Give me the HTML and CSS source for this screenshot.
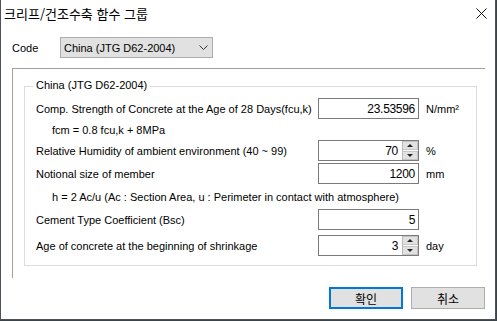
FILE: index.html
```html
<!DOCTYPE html>
<html lang="ko">
<head>
  <meta charset="UTF-8" />
  <title>크리프/건조수축 함수 그룹</title>
  <link rel="stylesheet" href="styles.css">
</head>
<body>
  <div class="dialog">
    <div class="titlebar">
      <span class="title">크리프/건조수축 함수 그룹</span>
      <svg class="close" width="11" height="11" viewBox="0 0 11 11">
        <path d="M0.5 0.5 L10.5 10.5 M10.5 0.5 L0.5 10.5" stroke="#111" stroke-width="1" fill="none"/>
      </svg>
    </div>

    <div class="content">
      <div class="code-row">
        <span class="code-label">Code</span>
        <div class="select">
          <span>China (JTG D62-2004)</span>
          <svg width="9" height="5" viewBox="0 0 9 5">
            <path d="M0.5 0.5 L4.5 4.5 L8.5 0.5" stroke="#333" stroke-width="1" fill="none"/>
          </svg>
        </div>
      </div>

      <div class="frame">
        <div class="group">
          <span class="legend">China (JTG D62-2004)</span>

          <div class="row">
            <span class="label">Comp. Strength of Concrete at the Age of 28 Days(fcu,k)</span>
            <div class="field"><span class="value">23.53596</span></div>
            <span class="unit">N/mm²</span>
          </div>
          <div class="note note-fcm">fcm = 0.8 fcu,k + 8MPa</div>
          <div class="row">
            <span class="label">Relative Humidity of ambient environment (40 ~ 99)</span>
            <div class="field spin">
              <span class="value">70</span>
              <div class="spinner">
                <span class="arrow up"></span>
                <span class="arrow down"></span>
              </div>
            </div>
            <span class="unit">%</span>
          </div>
          <div class="row row-gap-2">
            <span class="label">Notional size of member</span>
            <div class="field"><span class="value">1200</span></div>
            <span class="unit">mm</span>
          </div>
          <div class="note note-h">h = 2 Ac/u (Ac : Section Area, u : Perimeter in contact with atmosphere)</div>
          <div class="row row-gap-2">
            <span class="label">Cement Type Coefficient (Bsc)</span>
            <div class="field"><span class="value">5</span></div>
            <span class="unit"></span>
          </div>
          <div class="row row-gap-5">
            <span class="label">Age of concrete at the beginning of shrinkage</span>
            <div class="field spin">
              <span class="value">3</span>
              <div class="spinner">
                <span class="arrow up"></span>
                <span class="arrow down"></span>
              </div>
            </div>
            <span class="unit">day</span>
          </div>
        </div>
      </div>

      <div class="buttons">
        <button class="btn btn-default">확인</button>
        <button class="btn">취소</button>
      </div>
    </div>
  </div>
</body>
</html>
```

FILE: styles.css
```css
body {
  margin: 0;
  background: #3b434b;
  font-family: 'Liberation Sans', 'Noto Sans CJK KR', sans-serif;
  font-size: 11px;
  color: #000;
}

.dialog {
  width: 496px;
  height: 320px;
  box-sizing: border-box;
  background: #fff;
  border: 1px solid #4d5258;
  border-top: none;
  display: flex;
  flex-direction: column;
}

.titlebar {
  height: 26px;
  display: flex;
  align-items: center;
  justify-content: space-between;
  padding: 0 8px 0 3px;
}

.title {
  font-family: 'Noto Sans CJK KR', sans-serif;
  font-size: 13px;
}

.close {
  margin-top: 1px;
}

.content {
  padding: 0 9px 0 11px;
}

.code-row {
  margin-top: 11px;
  height: 21px;
  display: flex;
  align-items: center;
}

.code-label {
  width: 48px;
}

.select {
  width: 153px;
  height: 21px;
  box-sizing: border-box;
  background: #e1e1e1;
  border: 1px solid #adadad;
  display: flex;
  align-items: center;
  justify-content: space-between;
  padding: 0 4px 0 3px;
}

.frame {
  margin-top: 10px;
  width: 473px;
  height: 210px;
  box-sizing: border-box;
  border-top: 1px solid #a0a0a0;
  border-left: 1px solid #a0a0a0;
  padding: 17px 0 0 11px;
}

.group {
  position: relative;
  width: 453px;
  height: 180px;
  box-sizing: border-box;
  border: 1px solid #dcdcdc;
  padding: 11px 0 0 11px;
}

.legend {
  position: absolute;
  top: -8px;
  left: 8px;
  padding: 0 3px;
  background: #fff;
}

.row {
  height: 21px;
  display: flex;
  align-items: center;
}

.row-gap-2 {
  margin-top: 2px;
}

.row-gap-5 {
  margin-top: 5px;
}

.label {
  width: 282px;
  white-space: nowrap;
}

.field {
  width: 101px;
  height: 21px;
  box-sizing: border-box;
  border: 1px solid #7a7a7a;
  display: flex;
  align-items: center;
  justify-content: flex-end;
  padding-right: 3px;
}

.field.spin {
  padding-right: 0;
}

.value {
  font-size: 12px;
  letter-spacing: -0.3px;
}

.spin .value {
  margin-right: 4px;
}

.spinner {
  width: 16px;
  height: 19px;
  box-sizing: border-box;
  display: flex;
  flex-direction: column;
  gap: 1px;
  border-left: 1px solid #b8b8b8;
}

.arrow {
  flex: 1;
  background: #e1e1e1;
  border: 1px solid #c4c4c4;
  border-left: none;
  display: flex;
  align-items: center;
  justify-content: center;
}

.arrow::after {
  content: '';
  border-left: 3px solid transparent;
  border-right: 3px solid transparent;
}

.arrow.up::after {
  border-bottom: 3px solid #222;
}

.arrow.down::after {
  border-top: 3px solid #222;
}

.unit {
  margin-left: 7px;
}

.note {
  height: 20px;
  display: flex;
  align-items: center;
  padding-left: 16px;
}

.note-fcm {
  margin-top: 1px;
}

.note-h {
  margin-top: 3px;
}

.note-h + .row {
  margin-top: 2px;
}

.buttons {
  margin-top: 9px;
  display: flex;
  justify-content: flex-end;
  gap: 8px;
  padding-right: 1px;
}

.btn {
  width: 74px;
  height: 22px;
  box-sizing: border-box;
  background: #e1e1e1;
  border: 1px solid #adadad;
  font-family: 'Noto Sans CJK KR', sans-serif;
  font-size: 12px;
  padding: 0;
  color: #000;
}

.btn-default {
  border: 2px solid #0078d7;
}
```
